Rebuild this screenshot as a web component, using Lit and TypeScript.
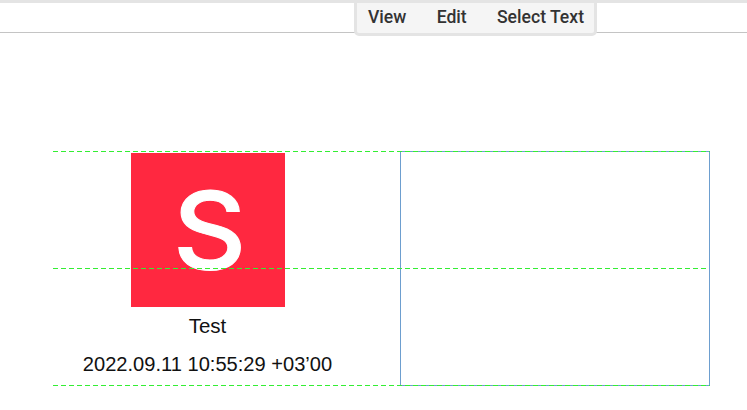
import { LitElement, html, css } from "lit";
import { customElement } from "lit/decorators.js";

@customElement("app-root")
export class AppRoot extends LitElement {
  static styles = css`
    :host { display: block; width: 747px; height: 410px; background: #fff; overflow: hidden; font-family: "Liberation Sans", Arial, sans-serif; color: #111; }
    .toolbar { height: 29px; border-top: 3px solid #e4e4e4; border-bottom: 1px solid #c4c4c4; position: relative; }
    .menu { position: absolute; left: 354px; top: -3px; width: 243px; height: 36px; box-sizing: border-box; background: #f5f5f5; border: 3px solid #e4e4e4; border-radius: 0 0 5px 5px; display: flex; align-items: center; font: 500 17.6px Roboto, sans-serif; color: #333; padding: 0 0 3px 11px; gap: 30.3px; }
    .sheet { margin: 118px 0 0 53px; width: 657px; height: 235px; display: grid; grid-template-columns: 347px 310px; position: relative; }
    .left { display: flex; flex-direction: column; align-items: center; padding-top: 2px; padding-right: 38px; }
    .logo { width: 154px; height: 154px; box-sizing: border-box; padding-left: 4px; background: #ff2840; color: #fff; display: flex; align-items: center; justify-content: center; font: 500 107px Inter, sans-serif; line-height: 154px; }
    .glyph { display: inline-block; transform: scaleX(1.06); -webkit-text-stroke: 1px #fff; }
    .name { font-size: 20.5px; margin-top: 9px; line-height: 20px; }
    .date { font-size: 20.1px; margin-top: 18px; line-height: 20px; white-space: nowrap; }
    .right { border: 1px solid #6d9ecf; }
    .dash { position: absolute; height: 1px; background: repeating-linear-gradient(90deg, #33ee33 0 5px, transparent 5px 8px); }
    .top { left: 0; width: 657px; top: 0; }
    .bottom { left: 0; width: 657px; bottom: 0; }
    .mid { left: 0; width: 653px; top: 117px; }
  `;
  render() {
    return html`
      <div class="toolbar">
        <div class="menu"><span>View</span><span>Edit</span><span>Select Text</span></div>
      </div>
      <div class="sheet">
        <div class="left">
          <div class="logo"><span class="glyph">S</span></div>
          <div class="name">Test</div>
          <div class="date">2022.09.11 10:55:29 +03’00</div>
        </div>
        <div class="right"></div>
        <div class="dash top"></div>
        <div class="dash bottom"></div>
        <div class="dash mid"></div>
      </div>
    `;
  }
}
